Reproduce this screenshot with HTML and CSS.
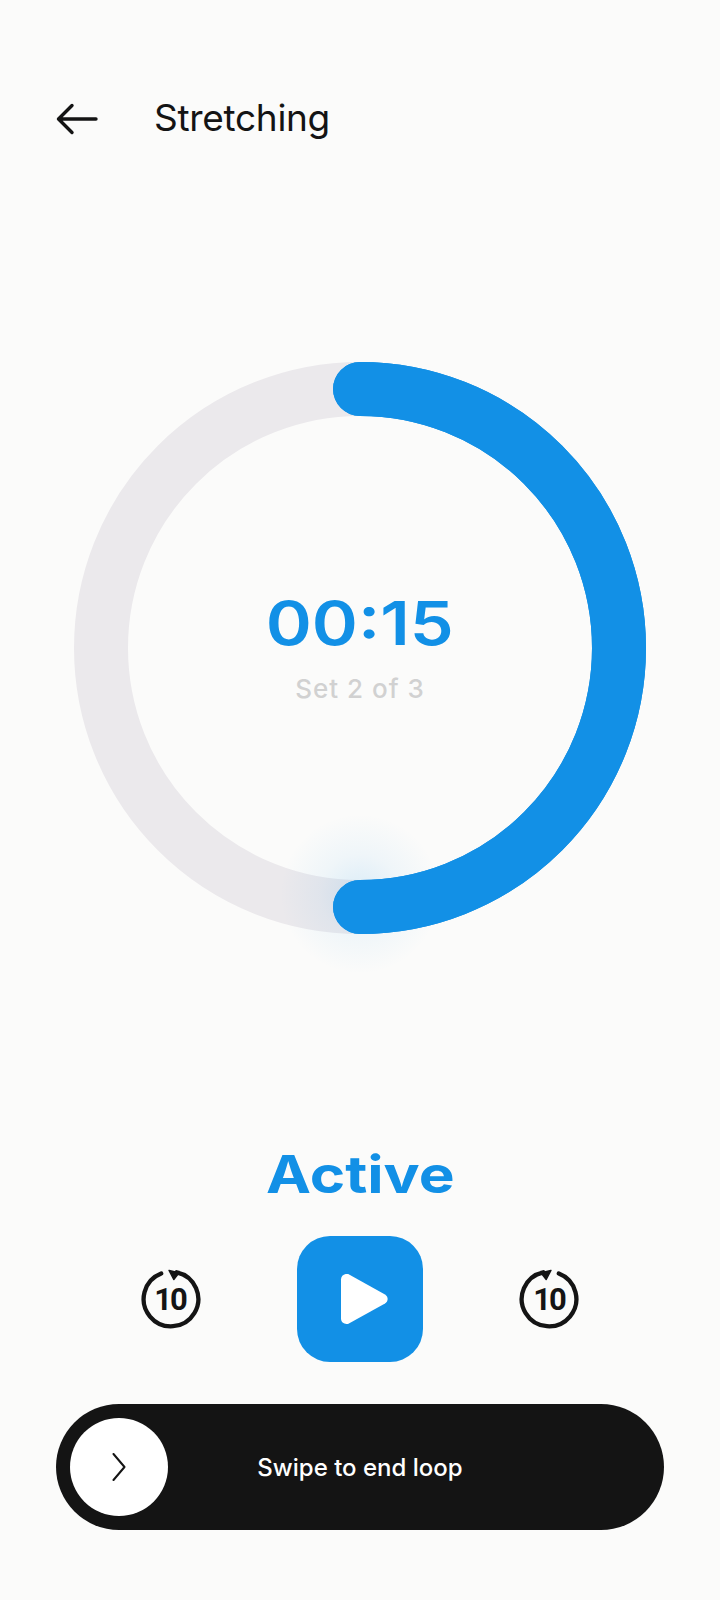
FILE: index.html
```html
<!DOCTYPE html>
<html lang="en">
<head>
<meta charset="utf-8">
<title>Stretching</title>
<link rel="stylesheet" href="styles.css">
</head>
<body>
<main class="screen">
  <header class="topbar">
    <svg class="back" viewBox="0 0 42 32" aria-hidden="true">
      <path d="M40 16H2.5M16 2.5 2.5 16 16 29.5"/>
    </svg>
    <h1 class="title">Stretching</h1>
  </header>

  <section class="timer">
    <svg class="ring" viewBox="0 0 572 572" aria-hidden="true">
      <defs>
        <radialGradient id="glow">
          <stop offset="0" stop-color="#1290e6" stop-opacity=".14"/>
          <stop offset=".5" stop-color="#1290e6" stop-opacity=".05"/>
          <stop offset="1" stop-color="#1290e6" stop-opacity="0"/>
        </radialGradient>
      </defs>
      <circle class="track" cx="286" cy="286" r="259"/>
      <path class="progress" d="M286 27A259 259 0 0 1 286 545"/>
    </svg>
    <svg class="glow" viewBox="0 0 160 160" aria-hidden="true">
      <circle cx="80" cy="80" r="80" fill="url(#glow)"/>
    </svg>
    <svg class="ring ring-over" viewBox="0 0 572 572" aria-hidden="true">
      <path class="progress" d="M286 27A259 259 0 0 1 286 545"/>
    </svg>
    <div class="readout">
      <div class="time"><span>00:15</span></div>
      <div class="set">Set 2 of 3</div>
    </div>
  </section>

  <h2 class="state"><span>Active</span></h2>

  <section class="controls">
    <svg class="skip" viewBox="0 0 64 64" aria-hidden="true">
      <path class="skip-arc" d="M37.700 5.300A27.300 27.300 0 1 1 22.200 6.500"/>
      <path class="skip-head" d="M30.100 3.500 40 5.800 34.800 12.500Z"/>
      <text class="skip-num" x="31" y="42.500">10</text>
    </svg>
    <button class="play" type="button" aria-label="Play">
      <svg viewBox="0 0 48 50" aria-hidden="true">
        <path d="M1 5.500C1 1.500 4.500-.5 8-.1L45 20.500C48.500 22.500 48.500 27.500 45 29.500L8 49.900C4.500 50.500 1 48.500 1 44.500Z"/>
      </svg>
    </button>
    <svg class="skip" viewBox="0 0 64 64" aria-hidden="true">
      <path class="skip-arc" d="M26.300 5.300A27.300 27.300 0 1 0 41.800 6.500"/>
      <path class="skip-head" d="M33.900 3.500 24 5.800 29.200 12.500Z"/>
      <text class="skip-num" x="32" y="42.500">10</text>
    </svg>
  </section>

  <section class="swipe">
    <div class="knob">
      <svg viewBox="0 0 14 28" aria-hidden="true"><path d="M1.500 1 12.500 14 1.500 27"/></svg>
    </div>
    <span class="swipe-label">Swipe to end loop</span>
  </section>
</main>
</body>
</html>
```

FILE: styles.css
```css
* { box-sizing: border-box; }

html, body {
  margin: 0;
  padding: 0;
}

body {
  background: #fbfbfa;
  font-family: "Inter", "Liberation Sans", sans-serif;
}

.screen {
  width: 720px;
  height: 1600px;
  display: flex;
  flex-direction: column;
  overflow: hidden;
}

.topbar {
  display: flex;
  align-items: center;
  gap: 56px;
  height: 44px;
  margin-top: 97px;
  padding-left: 56px;
}

.back {
  width: 42px;
  height: 32px;
  flex: none;
  fill: none;
  stroke: #141414;
  stroke-width: 3.400;
  stroke-linecap: round;
  stroke-linejoin: round;
}

.title {
  margin: 0 0 2px;
  font-size: 37px;
  font-weight: 400;
  letter-spacing: -0.3px;
  color: #141414;
  line-height: 44px;
}

.timer {
  position: relative;
  width: 572px;
  height: 572px;
  margin: 221px auto 0;
}

.ring {
  display: block;
  width: 572px;
  height: 572px;
  fill: none;
}

.ring-over {
  position: absolute;
  left: 0;
  top: 0;
}

.glow {
  position: absolute;
  left: 206px;
  top: 452px;
  width: 160px;
  height: 160px;
}

.track {
  fill: none;
  stroke: #ebe9ec;
  stroke-width: 54;
}

.progress {
  fill: none;
  stroke: #1290e6;
  stroke-width: 54;
  stroke-linecap: round;
}

.readout {
  position: absolute;
  left: 0;
  right: 0;
  top: 226px;
  text-align: center;
}

.time {
  font-size: 60px;
  font-weight: 600;
  line-height: 70px;
  color: #1290e6;
}

.time span {
  display: inline-block;
  transform: scaleX(1.165);
}

.state span {
  display: inline-block;
  transform: scaleX(1.16);
}

.set {
  margin-top: 15px;
  font-size: 26px;
  font-weight: 500;
  line-height: 32px;
  letter-spacing: 1px;
  color: #d1d1d1;
}

.state {
  margin: 211px 0 0;
  text-align: center;
  font-size: 52px;
  font-weight: 700;
  line-height: 60px;
  color: #1290e6;
}

.controls {
  display: flex;
  justify-content: center;
  align-items: center;
  gap: 94px;
  margin-top: 31px;
}

.skip {
  width: 64px;
  height: 64px;
  flex: none;
}

.skip-arc {
  fill: none;
  stroke: #141414;
  stroke-width: 4.300;
  stroke-linecap: round;
}

.skip-head {
  fill: #141414;
  stroke: #141414;
  stroke-width: 1.500;
  stroke-linejoin: round;
}

.skip-num {
  font-family: "Roboto", sans-serif;
  font-size: 31px;
  font-weight: 700;
  letter-spacing: -2px;
  text-anchor: middle;
  fill: #141414;
}

.play {
  width: 126px;
  height: 126px;
  padding: 0 0 0 8px;
  border: 0;
  border-radius: 33px;
  background: #1290e6;
  display: flex;
  align-items: center;
  justify-content: center;
}

.play svg {
  width: 48px;
  height: 50px;
  display: block;
  fill: #fff;
}

.swipe {
  position: relative;
  display: flex;
  align-items: center;
  justify-content: center;
  width: 608px;
  height: 126px;
  margin: 42px auto 0;
  border-radius: 63px;
  background: #141414;
}

.knob {
  position: absolute;
  left: 14px;
  top: 14px;
  width: 98px;
  height: 98px;
  border-radius: 50%;
  background: #fff;
  display: flex;
  align-items: center;
  justify-content: center;
}

.knob svg {
  width: 14px;
  height: 28px;
  fill: none;
  stroke: #141414;
  stroke-width: 2;
  stroke-linecap: round;
  stroke-linejoin: round;
}

.swipe-label {
  font-size: 24px;
  font-weight: 500;
  color: #fff;
}
```
